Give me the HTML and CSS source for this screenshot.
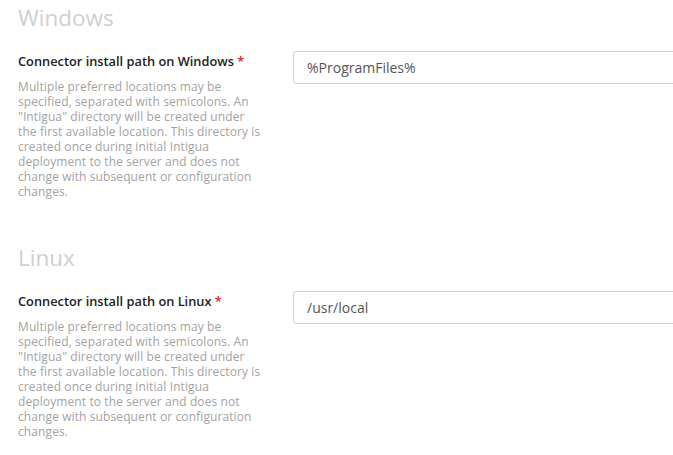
FILE: index.html
```html
<!DOCTYPE html>
<html>
<head>
<meta charset="utf-8">
<link rel="stylesheet" href="styles.css">
</head>
<body>
<div class="page">
  <section class="section">
    <h2 class="section-title">Windows</h2>
    <div class="field">
      <div class="field-info">
        <div class="field-label">Connector install path on Windows <span class="req">*</span></div>
        <p class="field-help">Multiple preferred locations may be specified, separated with semicolons. An "Intigua" directory will be created under the first available location. This directory is created once during initial Intigua deployment to the server and does not change with subsequent or configuration changes.</p>
      </div>
      <div class="field-control">
        <input class="text-input" type="text" value="%ProgramFiles%">
      </div>
    </div>
  </section>
  <section class="section">
    <h2 class="section-title">Linux</h2>
    <div class="field">
      <div class="field-info">
        <div class="field-label">Connector install path on Linux <span class="req">*</span></div>
        <p class="field-help">Multiple preferred locations may be specified, separated with semicolons. An "Intigua" directory will be created under the first available location. This directory is created once during initial Intigua deployment to the server and does not change with subsequent or configuration changes.</p>
      </div>
      <div class="field-control">
        <input class="text-input" type="text" value="/usr/local">
      </div>
    </div>
  </section>
</div>
</body>
</html>
```
FILE: styles.css
```css
html, body {
  margin: 0;
  padding: 0;
  background: #fff;
}
body {
  font-family: "Open Sans", "Noto Sans", sans-serif;
  overflow: hidden;
}
.page {
  padding: 4px 0 0 18px;
  overflow: hidden;
}
.section {
  margin-bottom: 45px;
}
.section:last-child {
  margin-bottom: 0;
}
.section-title {
  margin: 0;
  font-size: 22.5px;
  font-weight: 400;
  line-height: 28px;
  color: #cfcfcf;
}
.field {
  display: flex;
  margin-top: 19px;
}
.field-info {
  width: 248px;
  flex: none;
  margin-right: 27px;
}
.field-label {
  font-size: 12.8px;
  font-weight: 600;
  color: #222;
  line-height: 17px;
  padding-top: 2px;
}
.req {
  color: #e41b1b;
}
.field-help {
  margin: 9px 0 0;
  font-size: 12px;
  letter-spacing: 0.1px;
  line-height: 15px;
  color: #a3a3a3;
}
.field-control {
  flex: 1;
  min-width: 0;
  overflow: hidden;
}
.text-input {
  box-sizing: border-box;
  width: calc(100% + 4px);
  height: 33px;
  border: 1px solid #cfcfcf;
  border-radius: 3px;
  padding: 0 13px;
  font-family: inherit;
  font-size: 14px;
  color: #555;
  outline: none;
  display: block;
}
```
